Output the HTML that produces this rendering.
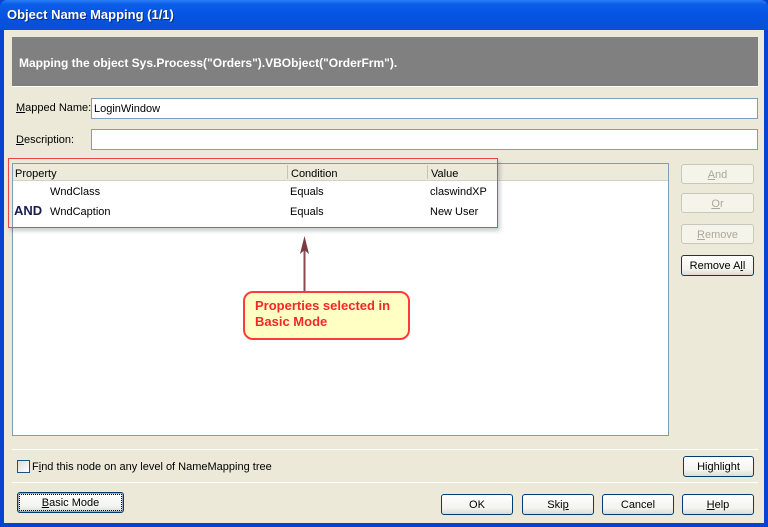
<!DOCTYPE html>
<html><head><style>
*{box-sizing:border-box;margin:0;padding:0}
body{width:768px;height:527px;overflow:hidden;font-family:"Liberation Sans",sans-serif;font-size:11px;color:#000;position:relative;background:#0842d0}
.a{position:absolute}
#title{left:0;top:0;width:768px;height:30px;background:linear-gradient(#2a7cf5 0%,#0a5ce8 15%,#0553e0 60%,#0a4fd4 100%);border-radius:7px 7px 0 0}
#title span{position:absolute;left:7px;top:7px;color:#fff;font-weight:bold;font-size:13px;font-family:"Liberation Sans",sans-serif;text-shadow:1px 1px #0a2a80}
#body{left:4px;top:30px;width:760px;height:493px;background:#ece9d8}
.in{background:#fff;border:1px solid #7f9db9}
.btn{border:1px solid #003c74;border-radius:3px;background:linear-gradient(#fff,#f3f3ef 70%,#dcdcd3);text-align:center;line-height:20px}
.dis{border-color:#c9c7ba;color:#aca899;background:#f5f4ea}
u{text-decoration:underline}
</style></head><body>
<div id="title" class="a"><span>Object Name Mapping (1/1)</span></div>
<div id="body" class="a"></div>
<div class="a" style="left:12px;top:37px;width:746px;height:50px;background:#808080;border-bottom:1px solid #fff"></div>
<div class="a" style="left:19px;top:56px;color:#fff;font-weight:bold;font-size:12px">Mapping the object Sys.Process("Orders").VBObject("OrderFrm").</div>
<div class="a" style="left:16px;top:102px"><u>M</u>apped Name:</div>
<div class="a in" style="left:91px;top:98px;width:667px;height:21px;padding:4px 2px">LoginWindow</div>
<div class="a" style="left:16px;top:134px"><u>D</u>escription:</div>
<div class="a in" style="left:91px;top:129px;width:667px;height:21px"></div>
<div class="a in" style="left:12px;top:163px;width:657px;height:273px"></div>
<div class="a" style="left:13px;top:164px;width:655px;height:17px;background:#ebeadb;border-bottom:1px solid #d6d2c2"></div>
<div class="a" style="left:15px;top:168px">Property</div>
<div class="a" style="left:287px;top:165px;width:1px;height:14px;background:#c7c5b2"></div>
<div class="a" style="left:291px;top:168px">Condition</div>
<div class="a" style="left:427px;top:165px;width:1px;height:14px;background:#c7c5b2"></div>
<div class="a" style="left:431px;top:168px">Value</div>
<div class="a" style="left:50px;top:186px">WndClass</div>
<div class="a" style="left:290px;top:186px">Equals</div>
<div class="a" style="left:430px;top:186px">claswindXP</div>
<div class="a" style="left:14px;top:203px;font-weight:bold;font-size:13px;color:#1a1a50;font-family:'Liberation Sans',sans-serif">AND</div>
<div class="a" style="left:50px;top:206px">WndCaption</div>
<div class="a" style="left:290px;top:206px">Equals</div>
<div class="a" style="left:430px;top:206px">New User</div>
<div class="a" style="left:8px;top:158px;width:490px;height:70px;border:1px solid #ee4444;box-shadow:2px 3px 4px rgba(0,0,0,.2)"></div>
<svg class="a" style="left:295px;top:232px" width="20" height="62"><line x1="9.5" y1="10" x2="9.5" y2="60" stroke="#8a4a50" stroke-width="2"/><path d="M5 22 L9.5 4 L14 22 L9.5 18Z" fill="#7a3a40"/></svg>
<div class="a" style="left:243px;top:291px;width:167px;height:49px;background:#ffffc4;border:2px solid #ff3a3a;border-radius:10px;color:#f02828;font-weight:bold;font-size:13px;font-family:'Liberation Sans',sans-serif;padding:5px 0 0 10px;line-height:16px">Properties selected in<br>Basic Mode</div>
<div class="a btn dis" style="left:681px;top:164px;width:73px;height:20px"><u>A</u>nd</div>
<div class="a btn dis" style="left:681px;top:193px;width:73px;height:20px"><u>O</u>r</div>
<div class="a btn dis" style="left:681px;top:224px;width:73px;height:20px"><u>R</u>emove</div>
<div class="a btn" style="left:681px;top:255px;width:73px;height:21px">Remove A<u>l</u>l</div>
<div class="a" style="left:12px;top:449px;width:746px;height:1px;background:#aca899;border-bottom:1px solid #fff"></div>
<div class="a" style="left:17px;top:460px;width:13px;height:13px;border:1px solid #1c5180;background:linear-gradient(135deg,#dcdcd6,#fff)"></div>
<div class="a" style="left:32px;top:461px">F<u>i</u>nd this node on any level of NameMapping tree</div>
<div class="a btn" style="left:683px;top:456px;width:71px;height:21px">Hi<u>g</u>hlight</div>
<div class="a" style="left:12px;top:482px;width:746px;height:1px;background:#aca899;border-bottom:1px solid #fff"></div>
<div class="a btn" style="left:17px;top:492px;width:107px;height:21px;outline:1px dotted #000;outline-offset:-3px;box-shadow:inset 0 0 0 1px #9ab"><u>B</u>asic Mode</div>
<div class="a btn" style="left:441px;top:494px;width:72px;height:21px">OK</div>
<div class="a btn" style="left:522px;top:494px;width:72px;height:21px">Ski<u>p</u></div>
<div class="a btn" style="left:602px;top:494px;width:72px;height:21px">Cancel</div>
<div class="a btn" style="left:682px;top:494px;width:72px;height:21px"><u>H</u>elp</div>
</body></html>
